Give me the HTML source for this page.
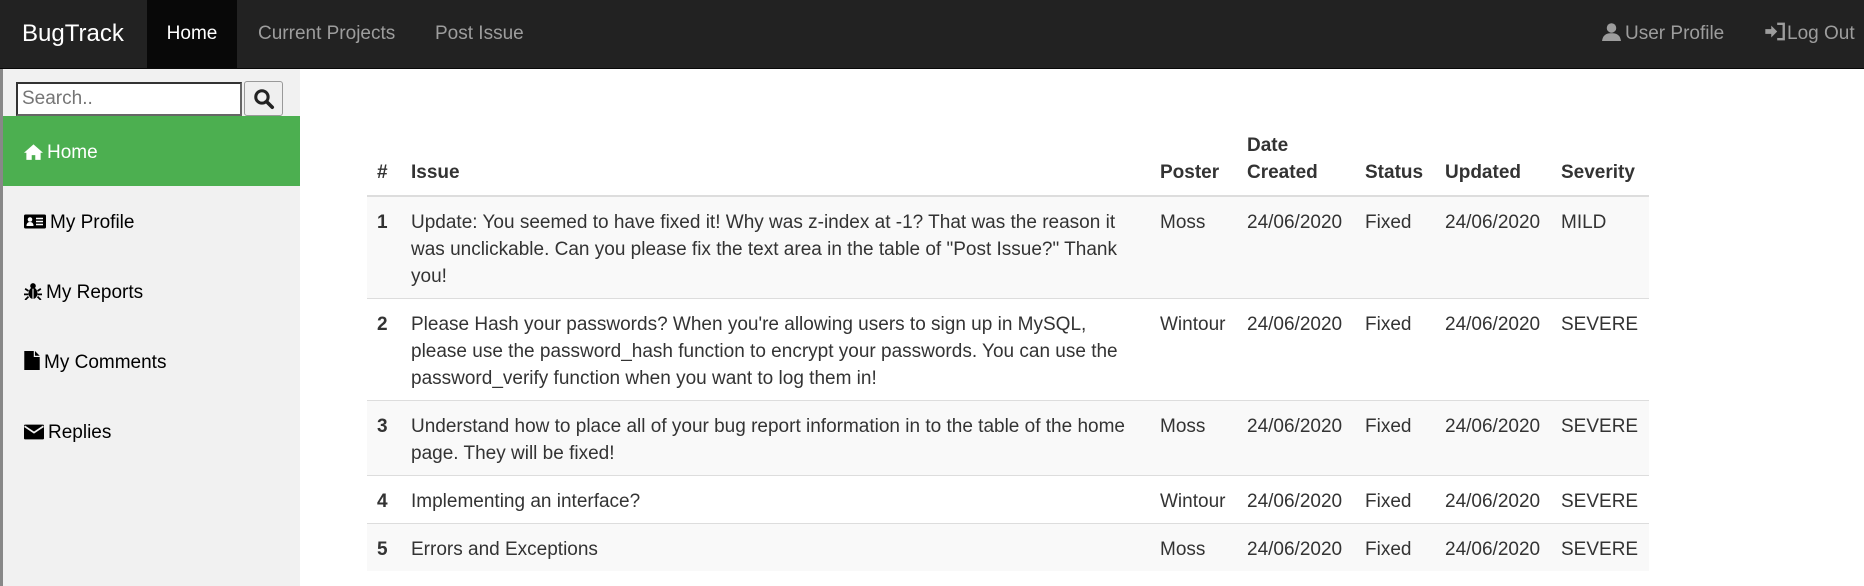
<!DOCTYPE html>
<html><head><meta charset="utf-8">
<style>
*{box-sizing:border-box;margin:0;padding:0}
html,body{width:1864px;height:586px;overflow:hidden;background:#fff;font-family:"Liberation Sans",Arial,sans-serif;color:#333}
.nav{position:absolute;left:0;top:0;width:1864px;height:69px;background:#222;border-bottom:1px solid #080808}
.nav span{position:absolute;top:0;height:68px;line-height:68px;font-size:19px;color:#9d9d9d;white-space:nowrap}
.brand{left:22px;font-size:24px!important;color:#fff!important}
.active{left:147px;width:90px;background:#080808;color:#fff!important;text-align:center}
.side{position:absolute;left:0;top:69px;width:300px;height:517px;background:#f1f1f1;border-left:3px solid #888}
.side .lbl{position:absolute;left:21px;font-size:19px;color:#000;white-space:nowrap;line-height:24px}
.side svg{vertical-align:-2px;margin-right:4px}
input{position:absolute;left:13px;top:13px;width:226px;height:34px;border:2px solid #333;border-right-color:#666;border-bottom-color:#666;font:19px "Liberation Sans",Arial,sans-serif;padding-left:4px;color:#777;background:#fff}
.btn{position:absolute;left:241px;top:12px;width:39px;height:35px;border:1px solid #999;border-radius:3px;background:#efefef}
.green{position:absolute;left:0;top:47px;width:297px;height:70px;background:#4caf50}
table{position:absolute;left:367px;top:121px;width:1282px;border-collapse:collapse;table-layout:fixed;font-size:19px;line-height:27px}
th,td{padding:12px 10px 8px;vertical-align:top;text-align:left;white-space:nowrap}
th{vertical-align:bottom;font-weight:bold;border-bottom:2px solid #ddd;padding-top:11px;padding-bottom:9px}
td{border-top:1px solid #ddd}
td:first-child{font-weight:bold}
tbody tr:nth-child(odd){background:#f9f9f9}
</style></head><body>
<div class="nav">
<span class="brand">BugTrack</span>
<span class="active">Home</span>
<span style="left:258px">Current Projects</span>
<span style="left:435px">Post Issue</span>
<span style="left:1602px"><svg width="19" height="19" viewBox="0 0 16 16" style="vertical-align:-2px;margin-right:4px"><circle cx="8" cy="5" r="4" fill="#9d9d9d"/><path d="M0 16 Q1 9 8 9.5 Q15 9 16 16Z" fill="#9d9d9d"/></svg>User Profile</span>
<span style="left:1765px"><svg width="22" height="19" viewBox="0 0 18 16" style="vertical-align:-2px"><path d="M0 6h5V3l5 5-5 5v-3H0z" fill="#9d9d9d"/><path d="M10 1.5h5.5v13H10" fill="none" stroke="#9d9d9d" stroke-width="2"/></svg>Log Out</span>
</div>
<div class="side">
<input value="" placeholder="Search..">
<div class="btn"><svg width="22" height="22" viewBox="0 0 16 16" style="position:absolute;left:8px;top:6px"><circle cx="6.5" cy="6.5" r="4.5" fill="none" stroke="#222" stroke-width="2.2"/><path d="M10 10l4 4" stroke="#222" stroke-width="2.6" stroke-linecap="round"/></svg></div>
<div class="green"></div>
<div class="lbl" style="top:72px;color:#fff"><svg width="19" height="17" viewBox="0 0 16 14"><path d="M8 1L0 8h2v6h4.5v-4h3v4H14V8h2z" fill="#fff"/></svg>Home</div>
<div class="lbl" style="top:142px"><svg width="22" height="17" viewBox="0 0 22 16"><rect x="0" y="1" width="22" height="14" rx="1.5" fill="#000"/><circle cx="6" cy="6" r="2.3" fill="#fff"/><path d="M2.5 12.5q0-4 3.5-4t3.5 4z" fill="#fff"/><path d="M12 5h7M12 8h7M12 11h7" stroke="#fff" stroke-width="1.5"/></svg>My Profile</div>
<div class="lbl" style="top:212px"><svg width="18" height="18" viewBox="0 0 16 16"><ellipse cx="8" cy="10" rx="4" ry="5" fill="#000"/><circle cx="8" cy="3.5" r="2.5" fill="#000"/><path d="M1 6l3 2M15 6l-3 2M0 11h4M16 11h-4M1 16l3-3M15 16l-3-3" stroke="#000" stroke-width="1.5"/><path d="M8 6v9" stroke="#f1f1f1" stroke-width="1"/></svg>My Reports</div>
<div class="lbl" style="top:282px"><svg width="16" height="19" viewBox="0 0 13 16"><path d="M0 0h8v5h5v11H0z" fill="#000"/><path d="M9 0l4 4H9z" fill="#000"/></svg>My Comments</div>
<div class="lbl" style="top:352px"><svg width="20" height="17" viewBox="0 0 19 15"><rect x="0" y="1" width="19" height="14" rx="1" fill="#000"/><path d="M0.5 2.5l9 6 9-6" fill="none" stroke="#f1f1f1" stroke-width="1.6"/></svg>Replies</div>
</div>
<table>
<colgroup><col style="width:34px"><col style="width:749px"><col style="width:87px"><col style="width:118px"><col style="width:80px"><col style="width:116px"><col style="width:98px"></colgroup>
<thead><tr><th>#</th><th>Issue</th><th>Poster</th><th>Date<br>Created</th><th>Status</th><th>Updated</th><th>Severity</th></tr></thead>
<tbody>
<tr><td>1</td><td>Update: You seemed to have fixed it! Why was z-index at -1? That was the reason it<br>was unclickable. Can you please fix the text area in the table of "Post Issue?" Thank<br>you!</td><td>Moss</td><td>24/06/2020</td><td>Fixed</td><td>24/06/2020</td><td>MILD</td></tr>
<tr><td>2</td><td>Please Hash your passwords? When you're allowing users to sign up in MySQL,<br>please use the password_hash function to encrypt your passwords. You can use the<br>password_verify function when you want to log them in!</td><td>Wintour</td><td>24/06/2020</td><td>Fixed</td><td>24/06/2020</td><td>SEVERE</td></tr>
<tr><td>3</td><td>Understand how to place all of your bug report information in to the table of the home<br>page. They will be fixed!</td><td>Moss</td><td>24/06/2020</td><td>Fixed</td><td>24/06/2020</td><td>SEVERE</td></tr>
<tr><td>4</td><td>Implementing an interface?</td><td>Wintour</td><td>24/06/2020</td><td>Fixed</td><td>24/06/2020</td><td>SEVERE</td></tr>
<tr><td>5</td><td>Errors and Exceptions</td><td>Moss</td><td>24/06/2020</td><td>Fixed</td><td>24/06/2020</td><td>SEVERE</td></tr>
</tbody></table>
</body></html>
